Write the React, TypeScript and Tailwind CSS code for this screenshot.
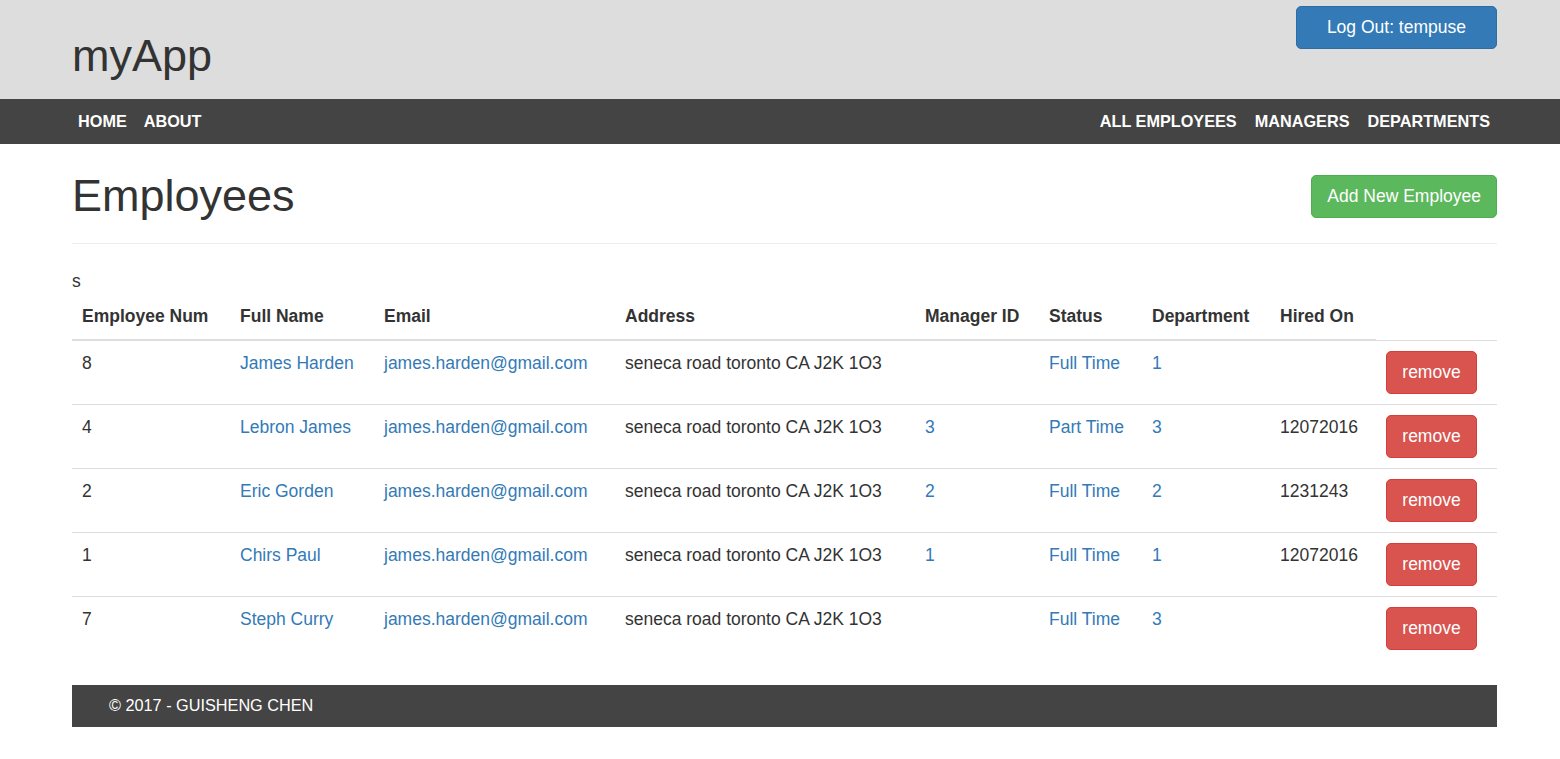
import React from "react";

type Row = {
  num: string;
  name: string;
  email: string;
  address: string;
  manager: string;
  status: string;
  dept: string;
  hired: string;
};

const rows: Row[] = [
  { num: "8", name: "James Harden", email: "james.harden@gmail.com", address: "seneca road toronto CA J2K 1O3", manager: "", status: "Full Time", dept: "1", hired: "" },
  { num: "4", name: "Lebron James", email: "james.harden@gmail.com", address: "seneca road toronto CA J2K 1O3", manager: "3", status: "Part Time", dept: "3", hired: "12072016" },
  { num: "2", name: "Eric Gorden", email: "james.harden@gmail.com", address: "seneca road toronto CA J2K 1O3", manager: "2", status: "Full Time", dept: "2", hired: "1231243" },
  { num: "1", name: "Chirs Paul", email: "james.harden@gmail.com", address: "seneca road toronto CA J2K 1O3", manager: "1", status: "Full Time", dept: "1", hired: "12072016" },
  { num: "7", name: "Steph Curry", email: "james.harden@gmail.com", address: "seneca road toronto CA J2K 1O3", manager: "", status: "Full Time", dept: "3", hired: "" },
];

export default function App() {
  const th = "px-[10px] py-[10px] text-left font-bold leading-[25px] border-b-2 border-[#ddd] align-bottom";
  const td = "px-[10px] pt-[10px] pb-[10px] leading-[25px] border-t border-[#ddd] align-top";
  return (
    <div className="min-h-screen bg-white text-[#333] text-[17.5px] font-['Liberation_Sans',Arial,sans-serif]">
      {/* top header */}
      <div className="bg-[#ddd] h-[99px]">
        <div className="ml-[72px] w-[1425px] flex justify-between items-start">
          <h1 className="mt-[31px] text-[45px] leading-[49.5px] font-normal text-[#333]">myApp</h1>
          <button className="mt-[6px] h-[43px] px-[30px] rounded-[5px] bg-[#337ab7] border border-[#2e6da4] text-white text-[17.5px] leading-[25px]">
            Log Out: tempuse
          </button>
        </div>
      </div>
      {/* navbar */}
      <div className="bg-[#444] h-[45px]">
        <div className="ml-[72px] w-[1425px] h-full flex items-center justify-between text-white font-bold text-[16.25px] uppercase">
          <div className="flex gap-[17px] pl-[6px]">
            <span>Home</span>
            <span>About</span>
          </div>
          <div className="flex gap-[18px] pr-[7px]">
            <span>All Employees</span>
            <span>Managers</span>
            <span>Departments</span>
          </div>
        </div>
      </div>
      {/* main */}
      <div className="ml-[72px] w-[1425px]">
        <div className="h-[100px] border-b border-[#eee] flex justify-between items-start">
          <h1 className="mt-[27px] text-[45px] leading-[49.5px] font-normal">Employees</h1>
          <button className="mt-[31px] h-[43px] px-[15px] rounded-[5px] bg-[#5cb85c] border border-[#4cae4c] text-white text-[17.5px] leading-[25px]">
            Add New Employee
          </button>
        </div>
        <p className="mt-[25px] leading-[25px]">s</p>
        <table className="w-[1425px] table-fixed border-collapse">
          <colgroup>
            <col className="w-[158px]" />
            <col className="w-[144px]" />
            <col className="w-[241px]" />
            <col className="w-[300px]" />
            <col className="w-[124px]" />
            <col className="w-[103px]" />
            <col className="w-[128px]" />
            <col className="w-[106px]" />
            <col className="w-[121px]" />
          </colgroup>
          <thead>
            <tr>
              <th className={th}>Employee Num</th>
              <th className={th}>Full Name</th>
              <th className={th}>Email</th>
              <th className={th}>Address</th>
              <th className={th}>Manager ID</th>
              <th className={th}>Status</th>
              <th className={th}>Department</th>
              <th className={th}>Hired On</th>
            </tr>
          </thead>
          <tbody>
            {rows.map((r, i) => (
              <tr key={i}>
                <td className={td}>{r.num}</td>
                <td className={td}><span className="text-[#337ab7]">{r.name}</span></td>
                <td className={td}><span className="text-[#337ab7]">{r.email}</span></td>
                <td className={td + " whitespace-nowrap"}>{r.address}</td>
                <td className={td}><span className="text-[#337ab7]">{r.manager}</span></td>
                <td className={td}><span className="text-[#337ab7]">{r.status}</span></td>
                <td className={td}><span className="text-[#337ab7]">{r.dept}</span></td>
                <td className={td}>{r.hired}</td>
                <td className={td}>
                  <button className="h-[43px] w-[91px] rounded-[5px] bg-[#d9534f] border border-[#d43f3a] text-white text-[17.5px] leading-[25px]">
                    remove
                  </button>
                </td>
              </tr>
            ))}
          </tbody>
        </table>
        <div className="mt-[25px] h-[42px] bg-[#444] flex items-center pl-[37px] text-white text-[16.25px]">
          © 2017 - GUISHENG CHEN
        </div>
      </div>
    </div>
  );
}
